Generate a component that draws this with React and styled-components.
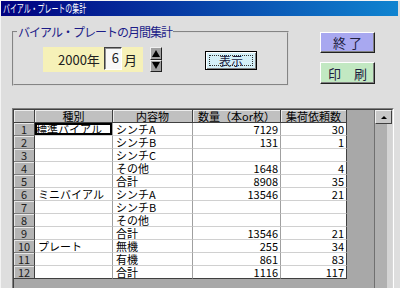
import React from 'react';
import styled, { createGlobalStyle } from 'styled-components';

const GlobalStyle = createGlobalStyle`
    html, body {
        margin: 0;
        padding: 0;
    }
    body {
        background: #dedede;
        font-family: "Noto Sans CJK JP", "Noto Sans", sans-serif;
    }
`;

const Window = styled.div`
    width: 400px;
    height: 288px;
    overflow: hidden;
    box-sizing: border-box;
    display: flex;
    flex-direction: column;
    background: #dedede;
    border-top: 1px solid #f4f4f4;
    border-left: 1px solid #f4f4f4;
`;

const TitleBar = styled.div`
    flex-shrink: 0;
    height: 15px;
    margin-right: 2px;
    padding-left: 2px;
    display: flex;
    align-items: center;
    overflow: hidden;
    background: linear-gradient(to right, #000080, #1084d0);
`;

const TitleText = styled.span`
    display: inline-block;
    color: #fff;
    font-size: 11px;
    line-height: 13px;
    white-space: nowrap;
    transform: scaleX(0.63);
    transform-origin: left center;
`;

const Body = styled.div`
    flex: 1;
    min-height: 0;
    display: flex;
    flex-direction: column;
    padding: 9px 6px 0 11px;
`;

const TopRow = styled.div`
    flex-shrink: 0;
    display: flex;
    align-items: flex-start;
`;

const GroupBox = styled.fieldset`
    box-sizing: border-box;
    width: 277px;
    min-width: 0;
    margin: 0;
    padding: 8px 0 12px 0;
    border: 2px groove #d8d8d8;
`;

const Legend = styled.legend`
    margin-left: 3px;
    padding: 0 1px;
    font-size: 12px;
    line-height: 14px;
    letter-spacing: -1px;
    color: #1c1c88;
`;

const PeriodRow = styled.div`
    display: flex;
    align-items: flex-start;
    padding-left: 29px;
`;

const PeriodPanel = styled.div`
    box-sizing: border-box;
    width: 100px;
    height: 25px;
    padding-left: 15px;
    display: flex;
    align-items: center;
    background: #f6f1b8;
    color: #202020;
    font-size: 13px;
`;

const MonthBox = styled.span`
    box-sizing: border-box;
    align-self: flex-start;
    width: 18px;
    height: 23px;
    margin-left: 4px;
    padding-right: 2px;
    text-align: right;
    line-height: 20px;
    background: #f8f8f8;
    border: 1px solid;
    border-color: #404040 #ffffff #ffffff #404040;
    box-shadow: inset 1px 1px 0 #909090;
`;

const MonthUnit = styled.span`
    margin-left: 2px;
`;

const Spinner = styled.div`
    width: 12px;
    height: 25px;
    margin-left: 7px;
    display: flex;
    flex-direction: column;
`;

const SpinButton = styled.div`
    flex: 1;
    box-sizing: border-box;
    display: flex;
    align-items: center;
    justify-content: center;
    background: #a0a0a0;
    border: 1px solid;
    border-color: #f0f0f0 #202020 #202020 #f0f0f0;

    &::after {
        content: '';
        border-left: 4px solid transparent;
        border-right: 4px solid transparent;
        ${p => (p.$up ? 'border-bottom: 7px solid #000;' : 'border-top: 7px solid #000;')}
    }
`;

const ShowButton = styled.div`
    box-sizing: border-box;
    width: 52px;
    height: 19px;
    margin: 4px 0 0 43px;
    padding: 3px;
    display: flex;
    background: #d4f0f8;
    border: 1px solid #000;
    box-shadow: inset 1px 1px 0 #fff, inset -1px -1px 0 #808080;
    font-size: 12px;
    color: #202040;
`;

const FocusRing = styled.span`
    flex: 1;
    display: flex;
    align-items: center;
    justify-content: center;
    border: 1px dotted #303030;
    line-height: 10px;
`;

const ButtonColumn = styled.div`
    display: flex;
    flex-direction: column;
    gap: 9px;
    margin: 7px 0 0 31px;
`;

const CommandButton = styled.div`
    box-sizing: border-box;
    width: 55px;
    height: ${p => p.$h}px;
    display: flex;
    align-items: center;
    justify-content: center;
    background: ${p => p.$bg};
    border: 1px solid;
    border-color: #ffffff #202020 #202020 #ffffff;
    box-shadow: inset -1px -1px 0 #808080;
    font-size: 13px;
    color: #202040;
    white-space: pre;
`;

const GridFrame = styled.div`
    flex-shrink: 0;
    height: 200px;
    margin-top: 22px;
    display: flex;
    border: 1px solid;
    border-color: #808080 #ffffff #ffffff #808080;
`;

const GridInner = styled.div`
    flex: 1;
    display: flex;
    background: #a8a8a8;
    border: 1px solid;
    border-color: #404040 #d8d8d8 #d8d8d8 #404040;
`;

const TableArea = styled.div`
    flex: 1;
`;

const DataGrid = styled.div`
    display: grid;
    grid-template-columns: 21px 78px 80px 88px 66px;
    grid-auto-rows: 13px;
    font-size: 11px;
    line-height: 12px;
    color: #000;
`;

const HeadCell = styled.div`
    box-sizing: border-box;
    background: #c0c0c0;
    text-align: center;
    border-right: 1px solid #404040;
    border-bottom: 1px solid #404040;
    box-shadow: inset 1px 1px 0 #ececec;
    white-space: nowrap;
`;

const RowHead = styled.div`
    box-sizing: border-box;
    background: #b4b4b4;
    text-align: center;
    color: #202020;
    border-right: 1px solid #404040;
    border-bottom: 1px solid ${p => (p.$last ? '#404040' : '#7c7c7c')};
    box-shadow: inset 1px 1px 0 #e8e8e8;
`;

const Cell = styled.div`
    box-sizing: border-box;
    background: #fff;
    white-space: nowrap;
    text-align: ${p => (p.$num ? 'right' : 'left')};
    padding: ${p => (p.$num ? '0 2px 0 0' : '0 0 0 3px')};
    border-right: 1px solid ${p => (p.$lastCol ? '#404040' : '#a0a0a0')};
    border-bottom: 1px solid ${p => (p.$lastRow ? '#404040' : '#d0d0d0')};
    ${p => p.$current && 'box-shadow: inset 0 0 0 2px #000; padding-left: 1px;'}
`;

const ScrollBar = styled.div`
    width: 18px;
    display: flex;
    flex-direction: column;
    border-left: 1px solid #707070;
    box-sizing: border-box;
`;

const ScrollUp = styled.div`
    height: 12px;
    display: flex;
    align-items: center;
    justify-content: center;
    background: #c8c8c8;
    border: 1px solid;
    border-color: #f0f0f0 #404040 #404040 #f0f0f0;

    &::after {
        content: '';
        border-left: 3px solid transparent;
        border-right: 3px solid transparent;
        border-bottom: 3px solid #000;
    }
`;

const ScrollThumb = styled.div`
    flex: 1;
    background: #b0b0b0;
    border-right: 5px solid #d4d4d4;
`;

const rows = [
    ['標準バイアル', 'シンチA', '7129', '30'],
    ['', 'シンチB', '131', '1'],
    ['', 'シンチC', '', ''],
    ['', 'その他', '1648', '4'],
    ['', '合計', '8908', '35'],
    ['ミニバイアル', 'シンチA', '13546', '21'],
    ['', 'シンチB', '', ''],
    ['', 'その他', '', ''],
    ['', '合計', '13546', '21'],
    ['プレート', '無機', '255', '34'],
    ['', '有機', '861', '83'],
    ['', '合計', '1116', '117'],
];

const headers = ['種別', '内容物', '数量（本or枚）', '集荷依頼数'];

const App = () => {
    return (
        <Window>
            <GlobalStyle />
            <TitleBar>
                <TitleText>バイアル・プレートの集計</TitleText>
            </TitleBar>
            <Body>
                <TopRow>
                    <GroupBox>
                        <Legend>バイアル・プレートの月間集計</Legend>
                        <PeriodRow>
                            <PeriodPanel>
                                2000年
                                <MonthBox>6</MonthBox>
                                <MonthUnit>月</MonthUnit>
                            </PeriodPanel>
                            <Spinner>
                                <SpinButton $up />
                                <SpinButton />
                            </Spinner>
                            <ShowButton>
                                <FocusRing>表示</FocusRing>
                            </ShowButton>
                        </PeriodRow>
                    </GroupBox>
                    <ButtonColumn>
                        <CommandButton $h={21} $bg="#a8a8f0">終 了</CommandButton>
                        <CommandButton $h={22} $bg="#c2e8c2">印　刷</CommandButton>
                    </ButtonColumn>
                </TopRow>

                <GridFrame>
                    <GridInner>
                        <TableArea>
                            <DataGrid>
                                <HeadCell />
                                {headers.map(h => (
                                    <HeadCell key={h}>{h}</HeadCell>
                                ))}
                                {rows.map((r, i) => {
                                    const lastRow = i === rows.length - 1;
                                    return (
                                        <React.Fragment key={i}>
                                            <RowHead $last={lastRow}>{i + 1}</RowHead>
                                            <Cell $lastRow={lastRow} $current={i === 0}>
                                                {r[0]}
                                            </Cell>
                                            <Cell $lastRow={lastRow}>{r[1]}</Cell>
                                            <Cell $lastRow={lastRow} $num>
                                                {r[2]}
                                            </Cell>
                                            <Cell $lastRow={lastRow} $num $lastCol>
                                                {r[3]}
                                            </Cell>
                                        </React.Fragment>
                                    );
                                })}
                            </DataGrid>
                        </TableArea>
                        <ScrollBar>
                            <ScrollUp />
                            <ScrollThumb />
                        </ScrollBar>
                    </GridInner>
                </GridFrame>
            </Body>
        </Window>
    );
};

export default App;
